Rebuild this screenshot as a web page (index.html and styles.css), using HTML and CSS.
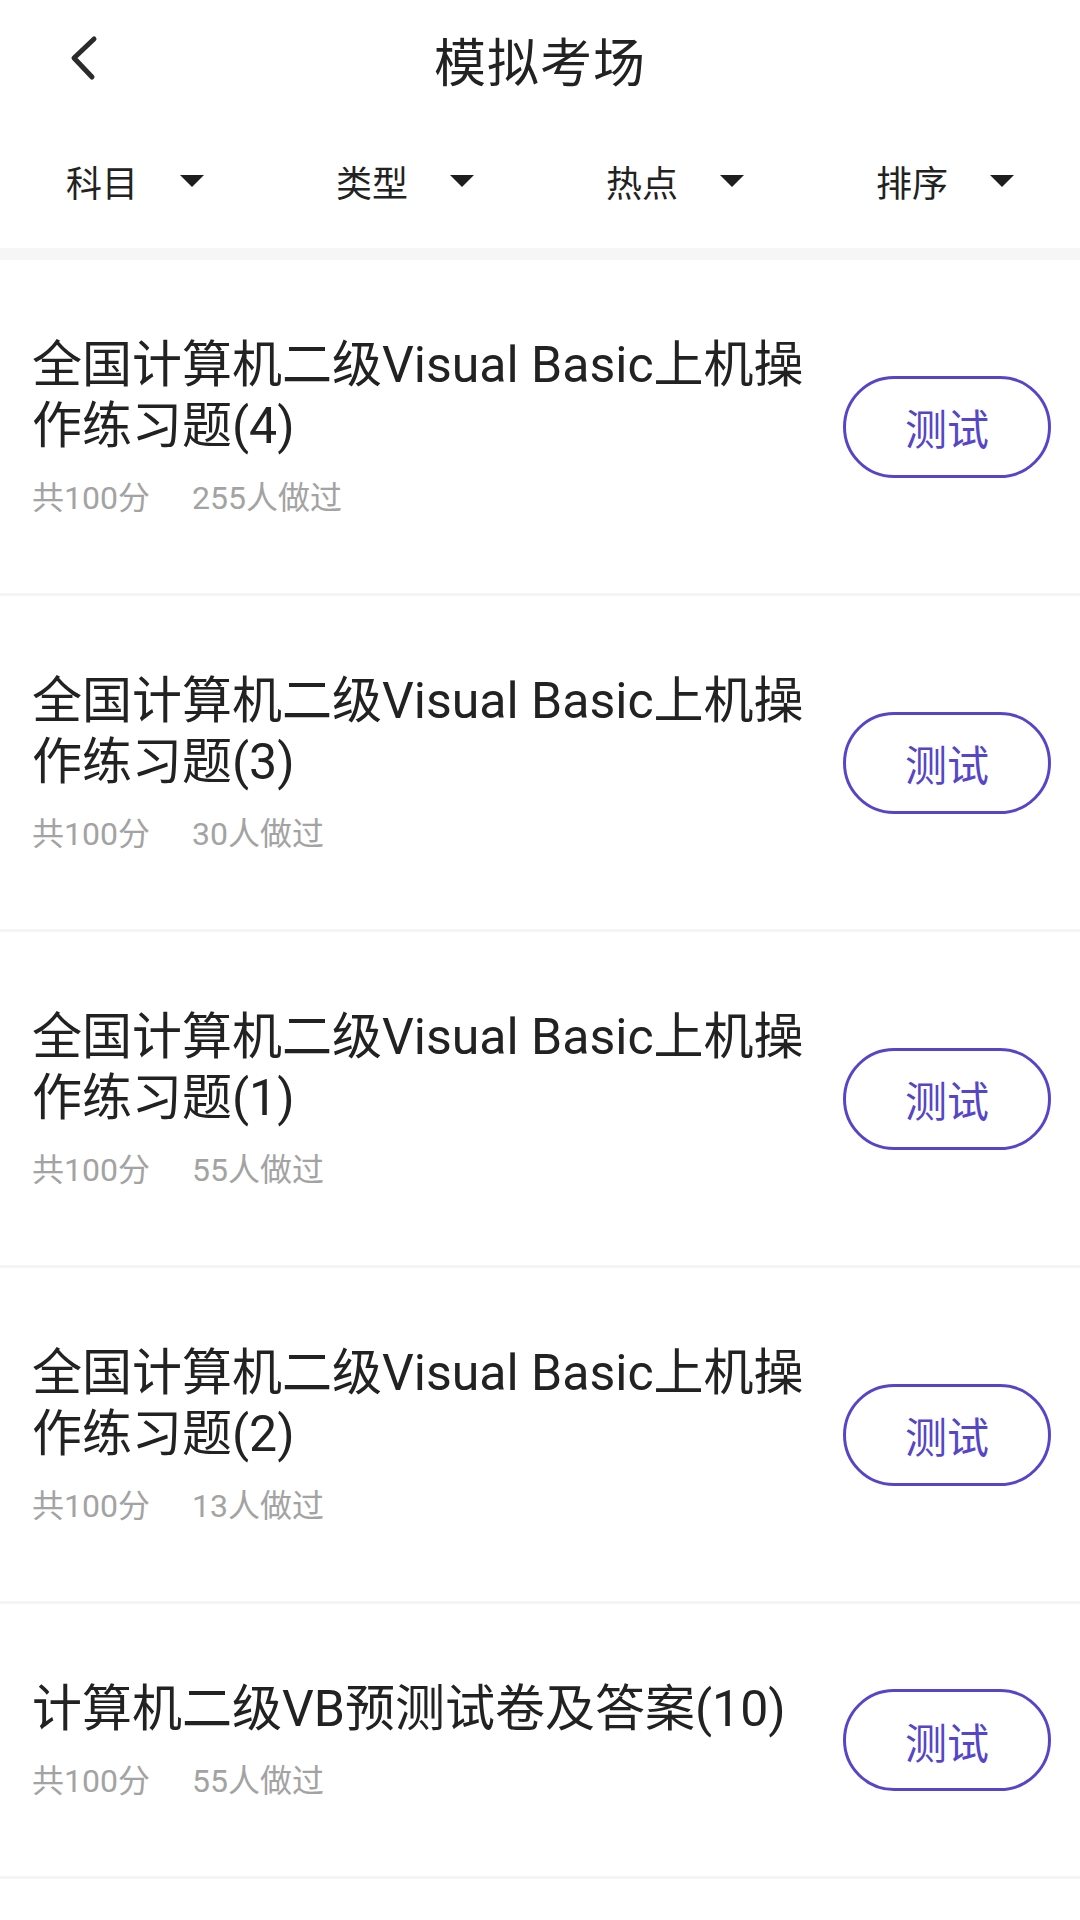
FILE: index.html
```html
<!DOCTYPE html>
<html lang="zh-CN">
<head>
    <meta charset="UTF-8">
    <meta name="viewport" content="width=device-width, initial-scale=1.0">
    <title>模拟考场</title>
    <link rel="stylesheet" href="styles.css">
</head>
<body>
    <div class="header">
        <div class="topbar">
            <a class="back" href="#">
                <svg width="40" height="48" viewBox="0 0 40 48">
                    <polyline points="28,6 8,25 26,44" fill="none" stroke="#2b2b2b" stroke-width="5" stroke-linecap="round" stroke-linejoin="round"/>
                </svg>
            </a>
            <div class="title">模拟考场</div>
        </div>
        <div class="filters">
            <div class="filter"><span>科目</span><i class="arrow"></i></div>
            <div class="filter"><span>类型</span><i class="arrow"></i></div>
            <div class="filter"><span>热点</span><i class="arrow"></i></div>
            <div class="filter"><span>排序</span><i class="arrow"></i></div>
        </div>
    </div>

    <div class="list">
        <div class="item">
            <div class="info">
                <div class="name">全国计算机二级Visual Basic上机操作练习题(4)</div>
                <div class="meta"><span>共100分</span><span>255人做过</span></div>
            </div>
            <button class="test">测试</button>
        </div>
        <div class="item">
            <div class="info">
                <div class="name">全国计算机二级Visual Basic上机操作练习题(3)</div>
                <div class="meta"><span>共100分</span><span>30人做过</span></div>
            </div>
            <button class="test">测试</button>
        </div>
        <div class="item">
            <div class="info">
                <div class="name">全国计算机二级Visual Basic上机操作练习题(1)</div>
                <div class="meta"><span>共100分</span><span>55人做过</span></div>
            </div>
            <button class="test">测试</button>
        </div>
        <div class="item">
            <div class="info">
                <div class="name">全国计算机二级Visual Basic上机操作练习题(2)</div>
                <div class="meta"><span>共100分</span><span>13人做过</span></div>
            </div>
            <button class="test">测试</button>
        </div>
        <div class="item">
            <div class="info">
                <div class="name">计算机二级VB预测试卷及答案(10)</div>
                <div class="meta"><span>共100分</span><span>55人做过</span></div>
            </div>
            <button class="test">测试</button>
        </div>
    </div>
</body>
</html>
```

FILE: styles.css
```css
body {
    margin: 0;
    background: #fff;
    font-family: Roboto, "Noto Sans CJK SC", sans-serif;
    color: #222;
}
.header {
    border-bottom: 12px solid #f6f6f6;
}
.topbar {
    height: 118px;
    display: flex;
    align-items: center;
    justify-content: center;
    position: relative;
}
.back {
    position: absolute;
    left: 66px;
    top: 33px;
    display: block;
}
.title {
    font-size: 52px;
    color: #222;
    letter-spacing: 1px;
}
.filters {
    height: 130px;
    display: flex;
    align-items: center;
}
.filter {
    width: 270px;
    box-sizing: border-box;
    padding-left: 66px;
    display: flex;
    align-items: center;
    font-size: 36px;
    color: #222;
    margin-top: -4px;
}
.arrow {
    width: 0;
    height: 0;
    margin-left: 42px;
    border-left: 12px solid transparent;
    border-right: 12px solid transparent;
    border-top: 12px solid #1e1e1e;
}
.item {
    display: flex;
    align-items: center;
    padding: 75px 29px 75px 32px;
    border-bottom: 3px solid #f5f5f5;
}
.info {
    flex: 1;
    padding-right: 20px;
}
.name {
    font-size: 50px;
    line-height: 61px;
    color: #222;
}
.meta {
    margin-top: 21px;
    font-size: 32px;
    line-height: 40px;
    color: #a3a3a3;
}
.meta span + span {
    margin-left: 42px;
}
.test {
    width: 208px;
    height: 102px;
    flex-shrink: 0;
    border: 3px solid #5546c9;
    border-radius: 51px;
    background: #fff;
    color: #5546c9;
    font-family: "Noto Sans CJK SC", sans-serif;
    font-size: 42px;
    padding: 0;
}
```
